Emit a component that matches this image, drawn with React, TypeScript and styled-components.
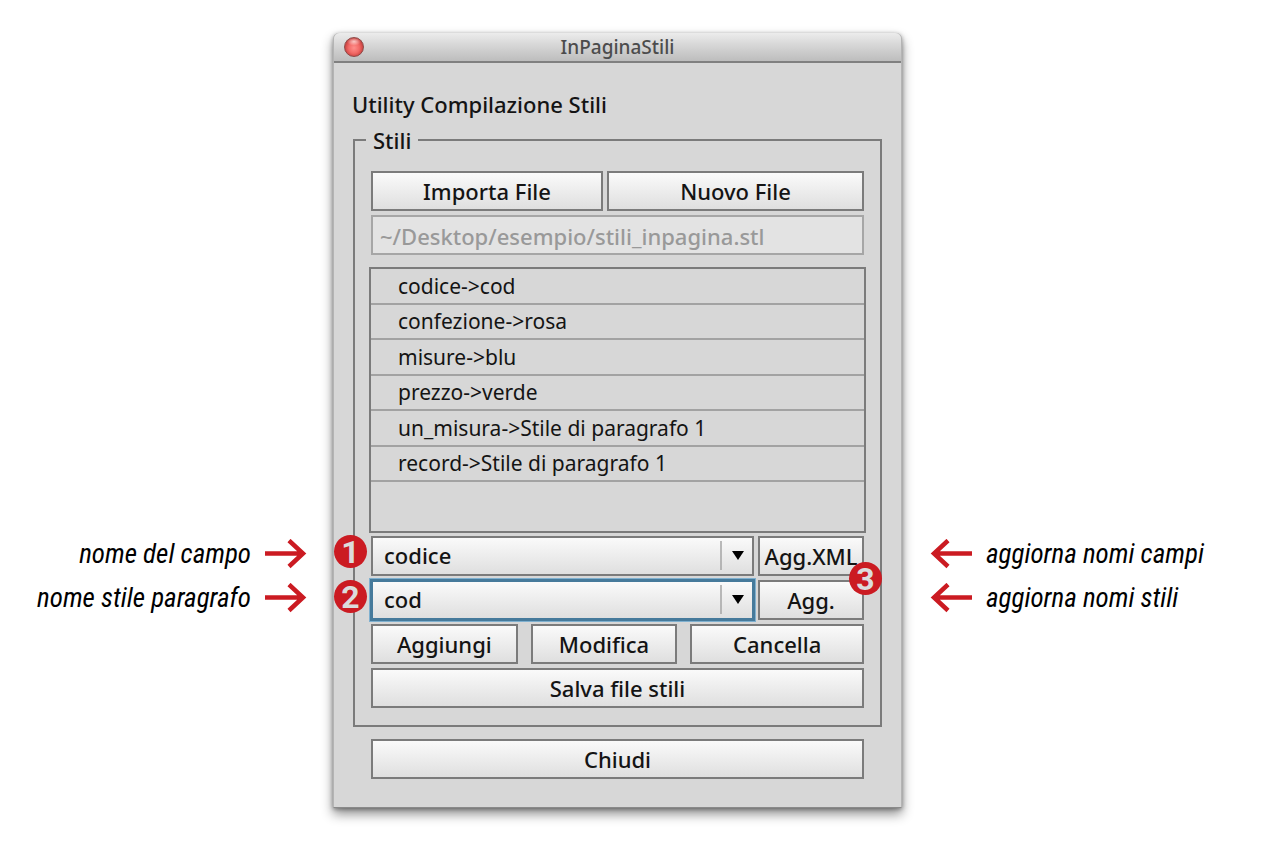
import React, { useState } from "react";
import styled, { createGlobalStyle } from "styled-components";

const uiFont = `"Noto Sans", "Open Sans", sans-serif`;
const line = "#7b7b7b";
const red = "#cb1b22";

const Global = createGlobalStyle`
  *, *::before, *::after { box-sizing: border-box; }
  body { margin: 0; background: #fff; color: #141414; font-family: ${uiFont}; }
`;

const Page = styled.main`
  display: grid;
  grid-template-columns: 333fr 569fr 366fr;
  align-items: end;
  padding: 33px 0 56px;
`;

const Notes = styled.ul<{ $side: "left" | "right" }>`
  list-style: none;
  margin: 0 0 188px;
  padding: ${(p) => (p.$side === "left" ? "0 26px 0 0" : "0 0 0 28px")};
`;

const Note = styled.li<{ $side: "left" | "right" }>`
  display: flex;
  flex-direction: ${(p) => (p.$side === "left" ? "row-reverse" : "row")};
  align-items: center;
  gap: 14px;
  height: 44px;
  color: #000;
  font: italic 27px/44px "Roboto Condensed", "Liberation Sans Narrow", sans-serif;
  white-space: nowrap;
`;

const ArrowIcon = styled.svg<{ $flip: boolean }>`
  flex: none;
  width: 42px;
  height: 30px;
  transform: ${(p) => (p.$flip ? "scaleX(-1)" : "none")};
`;

const Dialog = styled.section`
  min-width: 0;
  border: 1px solid #b4b4b4;
  border-top: 0;
  border-bottom-color: #8a8a8a;
  border-radius: 6px 6px 0 0;
  background: #d7d7d7;
  box-shadow: 0 6px 12px rgba(0, 0, 0, 0.45), 0 1px 4px rgba(0, 0, 0, 0.35);
`;

const TitleBar = styled.header`
  display: grid;
  grid-template-columns: 40px 1fr 40px;
  align-items: center;
  height: 30px;
  border-bottom: 2px solid #808080;
  border-radius: 6px 6px 0 0;
  background: linear-gradient(#ececec, #d8d8d8 40%, #bdbdbd);
`;

const CloseDot = styled.button`
  width: 20px;
  height: 20px;
  margin-left: 10px;
  padding: 0;
  border: 1px solid #8f4a48;
  border-radius: 50%;
  background:
    radial-gradient(ellipse 7px 4px at 50% 20%, rgba(255, 225, 222, 0.8), rgba(255, 225, 222, 0) 100%),
    radial-gradient(circle at 50% 55%, #ff8f8b 0, #f26a67 40%, #d04745 65%, #8f2f2e 100%);
`;

const Title = styled.h1`
  margin: 0;
  color: #4c4c4c;
  font-size: 19px;
  font-weight: 500;
  line-height: 28px;
  text-align: center;
`;

const Body = styled.form`
  padding: 27px 19px 28px;
`;

const Heading = styled.p`
  margin: 0 0 8px -1px;
  font-size: 22px;
  font-weight: 500;
  line-height: 28px;
`;

const Group = styled.fieldset`
  min-width: 0;
  margin: 0;
  padding: 17px 16px;
  border: 2px solid ${line};
`;

const Legend = styled.legend`
  margin-left: -5px;
  padding: 0 7px;
  font-size: 22px;
  font-weight: 500;
  line-height: 28px;
`;

const Row = styled.div<{ $columns: string; $gap?: number }>`
  display: grid;
  grid-template-columns: ${(p) => p.$columns};
  gap: ${(p) => p.$gap ?? 4}px;
  margin-bottom: 4px;
`;

const Button = styled.button`
  width: 100%;
  height: 40px;
  padding: 0;
  border: 2px solid ${line};
  background: linear-gradient(#fafafa, #dfdfdf);
  color: #141414;
  font: 500 22px/28px ${uiFont};
  white-space: nowrap;
`;

const PathField = styled.input`
  display: block;
  width: 100%;
  height: 40px;
  padding: 2px 7px 0;
  border: 2px solid #a6a6a6;
  border-radius: 0;
  background: #e3e3e3;
  color: #999;
  font: 500 22px/28px ${uiFont};
`;

const List = styled.ul`
  display: grid;
  grid-template-rows: repeat(6, 1fr);
  height: 266px;
  margin: 12px -2px 3px;
  padding: 0 0 49px;
  border: 2px solid ${line};
  list-style: none;
`;

const Item = styled.li`
  display: flex;
  align-items: center;
  padding-left: 27px;
  border-bottom: 2px solid #a2a2a2;
  font-size: 21px;
  line-height: 28px;
`;

const Combos = styled.div`
  position: relative;
`;

const ComboBox = styled.div`
  position: relative;
`;

const Select = styled.select<{ $active?: boolean }>`
  appearance: none;
  width: 100%;
  height: 40px;
  padding: 0 40px 2px 11px;
  border: 2px solid ${(p) => (p.$active ? "#467a9b" : line)};
  border-radius: 0;
  outline: none;
  box-shadow: ${(p) => (p.$active ? "0 0 0 1px #467a9b, 0 0 0 2px #7fb0cf" : "none")};
  background: linear-gradient(#fafafa, #dfdfdf);
  color: #141414;
  font: 500 22px/28px ${uiFont};
`;

const Caret = styled.svg`
  position: absolute;
  top: 5px;
  right: 2px;
  width: 32px;
  height: 30px;
  pointer-events: none;
`;

const Badge = styled.span<{ $spot: string }>`
  position: absolute;
  ${(p) => p.$spot}
  width: 33px;
  height: 33px;
  border-radius: 50%;
  background: ${red};
  color: #dcdcdc;
  font: bold 32px/34px Roboto, sans-serif;
  text-align: center;
`;

const Footer = styled.div`
  padding: 12px 18px 0;
`;

function Arrow({ flip = false }: { flip?: boolean }) {
  return (
    <ArrowIcon $flip={flip} viewBox="0 0 42 30" aria-hidden="true">
      <path d="M0 14.500H38M24 1.500L38 14.500L24 27.500" fill="none" stroke={red} strokeWidth="4.500" />
    </ArrowIcon>
  );
}

function Combo(props: { label: string; options: string[]; active?: boolean }) {
  const [value, setValue] = useState(props.options[0]);
  return (
    <ComboBox>
      <Select
        aria-label={props.label}
        $active={props.active}
        value={value}
        onChange={(e) => setValue(e.target.value)}
      >
        {props.options.map((o) => (
          <option key={o}>{o}</option>
        ))}
      </Select>
      <Caret viewBox="0 0 32 30" aria-hidden="true">
        <path d="M1 0V29" stroke="#a4a4a4" strokeWidth="1.500" />
        <path d="M12 10H24L18 19Z" fill="#000" />
      </Caret>
    </ComboBox>
  );
}

function NoteList({ side, texts }: { side: "left" | "right"; texts: string[] }) {
  return (
    <Notes $side={side}>
      {texts.map((t) => (
        <Note key={t} $side={side}>
          <Arrow flip={side === "right"} />
          <span>{t}</span>
        </Note>
      ))}
    </Notes>
  );
}

const mappings = [
  "codice->cod",
  "confezione->rosa",
  "misure->blu",
  "prezzo->verde",
  "un_misura->Stile di paragrafo 1",
  "record->Stile di paragrafo 1",
];

export default function App() {
  return (
    <>
      <Global />
      <Page>
        <NoteList side="left" texts={["nome del campo", "nome stile paragrafo"]} />
        <Dialog>
          <TitleBar>
            <CloseDot type="button" aria-label="Chiudi finestra" />
            <Title>InPaginaStili</Title>
          </TitleBar>
          <Body onSubmit={(e) => e.preventDefault()}>
            <Heading>Utility Compilazione Stili</Heading>
            <Group>
              <Legend>Stili</Legend>
              <Row $columns="232fr 257fr">
                <Button type="button">Importa File</Button>
                <Button type="button">Nuovo File</Button>
              </Row>
              <PathField aria-label="File stili" disabled defaultValue="~/Desktop/esempio/stili_inpagina.stl" />
              <List>
                {mappings.map((m) => (
                  <Item key={m}>{m}</Item>
                ))}
              </List>
              <Combos>
                <Row $columns="383fr 106fr">
                  <Combo label="Nome del campo" options={["codice", "confezione", "misure", "prezzo"]} />
                  <Button type="button">Agg.XML</Button>
                </Row>
                <Row $columns="383fr 106fr">
                  <Combo label="Nome stile paragrafo" options={["cod", "rosa", "blu", "verde"]} active />
                  <Button type="button">Agg.</Button>
                </Row>
                <Badge $spot="top: -1px; left: -37px;">1</Badge>
                <Badge $spot="top: 44px; left: -37px;">2</Badge>
                <Badge $spot="top: 26px; right: -18px;">3</Badge>
              </Combos>
              <Row $columns="147fr 147fr 174fr" $gap={13}>
                <Button type="button">Aggiungi</Button>
                <Button type="button">Modifica</Button>
                <Button type="button">Cancella</Button>
              </Row>
              <Button type="button">Salva file stili</Button>
            </Group>
            <Footer>
              <Button type="button">Chiudi</Button>
            </Footer>
          </Body>
        </Dialog>
        <NoteList side="right" texts={["aggiorna nomi campi", "aggiorna nomi stili"]} />
      </Page>
    </>
  );
}
